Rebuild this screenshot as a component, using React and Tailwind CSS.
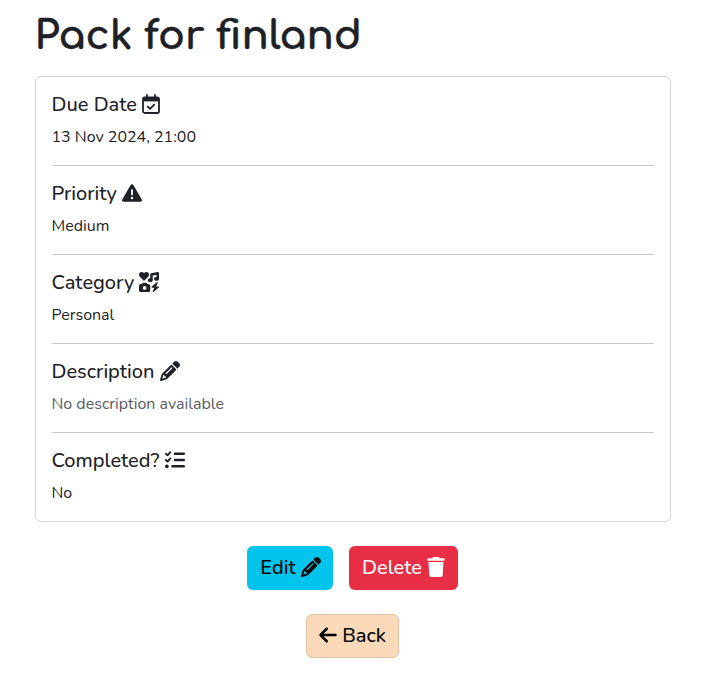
import React from "react";
import {
  FaTriangleExclamation,
  FaIcons,
  FaPencil,
  FaListCheck,
  FaTrash,
  FaArrowLeft,
} from "react-icons/fa6";

function CalendarIcon() {
  return (
    <svg viewBox="0 0 20 20" className="-ml-px mb-0.5 size-5 shrink-0" fill="none" stroke="currentColor">
      <path d="M6 1v3M14 1v3" strokeWidth="1.8" strokeLinecap="round" />
      <rect x="2" y="3.4" width="16" height="15.6" rx="1.8" strokeWidth="1.8" />
      <path d="M2 3.4h16v4H2z" fill="currentColor" stroke="none" />
      <path d="M6.8 12.6l2.2 2.2 4.2-4.2" strokeWidth="1.8" strokeLinecap="round" strokeLinejoin="round" />
    </svg>
  );
}

function Field({ title, icon, value, valueClass = "", last }) {
  return (
    <section className={last ? "" : "mb-4 border-b border-[#c7c8c8] pb-4"}>
      <h2 className="mb-2 -ml-[0.5px] flex h-6 items-center gap-[5.5px] text-xl leading-6 font-medium">
        <span>{title}</span>
        {icon}
      </h2>
      <p className={`-ml-[0.5px] h-6 text-base leading-6 whitespace-nowrap ${valueClass}`}>{value}</p>
    </section>
  );
}

export default function App() {
  return (
    <main className="h-[686px] bg-white pr-[38px] pl-[35px] pt-[12px] font-[Nunito,Lato,sans-serif] text-[#1e2226]">
      <h1 className="mb-4 -ml-[0.5px] h-12 whitespace-nowrap font-[Comfortaa,Quicksand,Nunito,sans-serif] text-[40px] leading-12 font-bold [-webkit-text-stroke:0.4px_#1e2226]">
        Pack for finland
      </h1>
      <div className="h-[446px] rounded-md border border-[#d3d4d5] p-4">
        <Field title="Due Date" icon={<CalendarIcon />} value="13 Nov 2024, 21:00" />
        <Field title="Priority" icon={<FaTriangleExclamation className="mb-0.5 size-5" />} value="Medium" />
        <Field title="Category" icon={<FaIcons className="mb-0.5 -ml-[0.5px] size-5" />} value="Personal" />
        <Field title="Description" icon={<FaPencil className="mb-0.5 size-5" />} value="No description available" valueClass="text-[#595c5f]" />
        <Field title="Completed?" icon={<FaListCheck className="mb-0.5 size-5" />} value="No" last />
      </div>
      <div className="mt-6 flex justify-center gap-4 pr-px text-xl font-medium">
        <button className="flex h-11 w-[86px] items-center justify-center gap-[5px] rounded-md bg-[#00c4eb] pl-px text-black">
          <span>Edit</span>
          <FaPencil className="mb-0.5 size-5" />
        </button>
        <button className="flex h-11 w-[109px] items-center justify-center gap-1 rounded-md bg-[#e82e44] pl-px text-white">
          <span>Delete</span>
          <FaTrash className="mb-0.5 size-5" />
        </button>
      </div>
      <div className="mt-6 flex justify-center pr-px text-xl font-medium">
        <button className="flex h-11 w-[93px] items-center justify-center gap-1 rounded-md border border-[#e2c5a6] bg-[#f9d9b7] pr-px text-black">
          <FaArrowLeft className="mb-0.5 size-5" />
          <span>Back</span>
        </button>
      </div>
    </main>
  );
}
